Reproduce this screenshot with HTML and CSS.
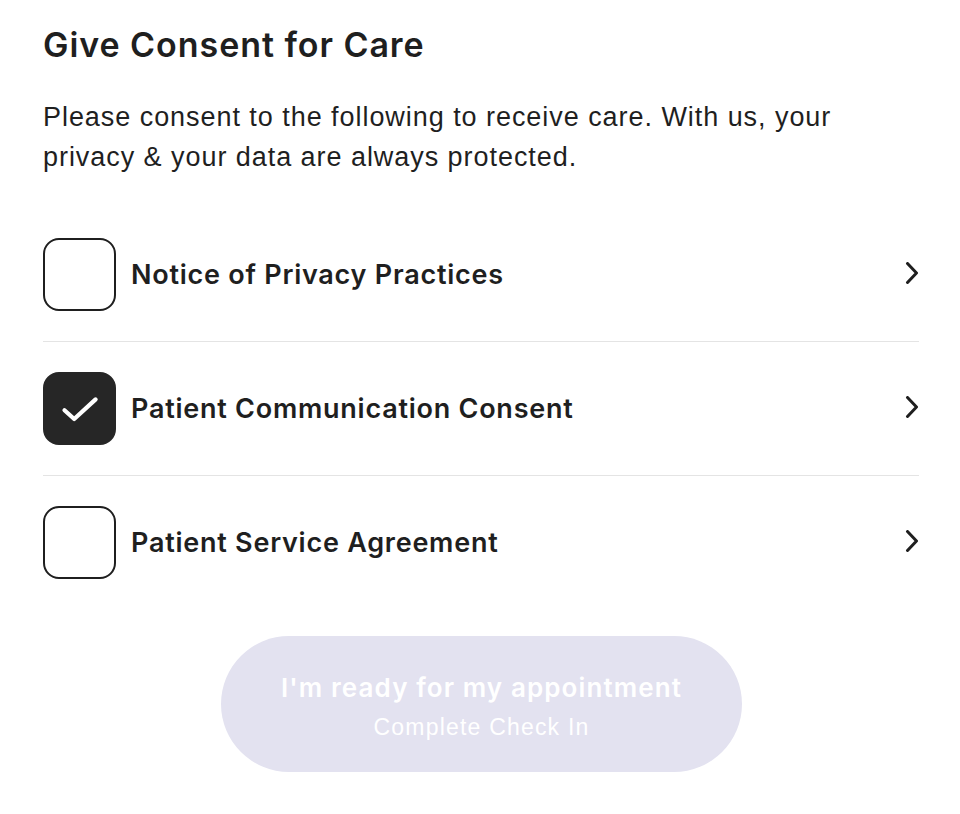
FILE: index.html
```html
<!DOCTYPE html>
<html lang="en">
<head>
<meta charset="utf-8">
<title>Give Consent for Care</title>
<link rel="stylesheet" href="styles.css">
</head>
<body>
<main class="page">
  <h1 class="title">Give Consent for Care</h1>
  <p class="intro">Please consent to the following to receive care. With us, your privacy &amp; your data are always protected.</p>
  <ul class="consents">
    <li class="consent">
      <span class="box"></span>
      <span class="label">Notice of Privacy Practices</span>
      <svg class="chev" width="14" height="22" viewBox="0 0 14 22"><path d="M2.5 1.5 L11.5 11 L2.5 20.5" fill="none" stroke="#1f1f1f" stroke-width="3" stroke-linecap="round" stroke-linejoin="round"/></svg>
    </li>
    <li class="consent">
      <span class="box checked"><svg width="40" height="30" viewBox="0 0 40 30"><path d="M4.5 16.2 L14.2 25 L35.6 5.4" fill="none" stroke="#fff" stroke-width="4.2" stroke-linecap="round" stroke-linejoin="round"/></svg></span>
      <span class="label">Patient Communication Consent</span>
      <svg class="chev" width="14" height="22" viewBox="0 0 14 22"><path d="M2.5 1.5 L11.5 11 L2.5 20.5" fill="none" stroke="#1f1f1f" stroke-width="3" stroke-linecap="round" stroke-linejoin="round"/></svg>
    </li>
    <li class="consent">
      <span class="box"></span>
      <span class="label">Patient Service Agreement</span>
      <svg class="chev" width="14" height="22" viewBox="0 0 14 22"><path d="M2.5 1.5 L11.5 11 L2.5 20.5" fill="none" stroke="#1f1f1f" stroke-width="3" stroke-linecap="round" stroke-linejoin="round"/></svg>
    </li>
  </ul>
  <div class="actions">
    <button class="ready" disabled>
      <span class="ready-main">I'm ready for my appointment</span>
      <span class="ready-sub">Complete Check In</span>
    </button>
  </div>
</main>
</body>
</html>
```
FILE: styles.css
```css
* { box-sizing: border-box; }
html, body { margin: 0; padding: 0; background: #fff; }
body { color: #1f1f1f; }
.page {
  width: 960px;
  padding: 23px 41px 0 43px;
}
.title {
  margin: 0;
  font-family: Inter, "Liberation Sans", sans-serif;
  font-weight: 600;
  font-size: 34px;
  line-height: 44px;
  letter-spacing: 0.95px;
  color: #1f1f1f;
}
.intro {
  margin: 30px 0 0;
  font-family: "Liberation Sans", Arial, sans-serif;
  font-size: 27px;
  line-height: 40px;
  letter-spacing: 0.95px;
  color: #1f1f1f;
}
.consents {
  list-style: none;
  margin: 31px 0 0;
  padding: 0;
}
.consent {
  display: flex;
  align-items: center;
  padding: 30px 0;
  border-bottom: 1px solid #e4e4e4;
}
.consent:last-child { border-bottom: none; }
.box {
  flex: none;
  width: 73px;
  height: 73px;
  border: 2px solid #1f1f1f;
  border-radius: 16px;
  display: flex;
  align-items: center;
  justify-content: center;
}
.box.checked { background: #262626; border-color: #262626; }
.label {
  flex: 1;
  margin-left: 15px;
  font-family: Inter, "Liberation Sans", sans-serif;
  font-weight: 600;
  font-size: 27px;
  letter-spacing: 0.75px;
  color: #1f1f1f;
}
.chev { flex: none; margin-top: -4px; }
.actions {
  display: flex;
  justify-content: center;
  margin-top: 27px;
}
.ready {
  width: 521px;
  height: 136px;
  border: none;
  border-radius: 68px;
  background: #e3e2f0;
  display: flex;
  flex-direction: column;
  align-items: center;
  justify-content: center;
  gap: 9px;
  color: #fff;
  cursor: default;
  margin-left: 1px;
  padding: 4px 0 0;
}
.ready-main {
  font-family: Inter, "Liberation Sans", sans-serif;
  font-weight: 600;
  font-size: 26px;
  line-height: 32px;
  letter-spacing: 1.1px;
}
.ready-sub {
  font-family: "Liberation Sans", Arial, sans-serif;
  font-size: 23px;
  line-height: 28px;
  letter-spacing: 1.2px;
}
```
